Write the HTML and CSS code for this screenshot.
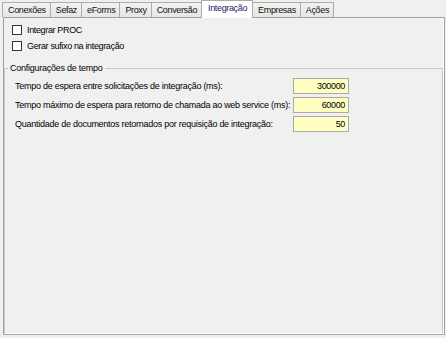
FILE: index.html
```html
<!DOCTYPE html>
<html lang="pt">
<head>
<meta charset="utf-8">
<title>Integração</title>
<link rel="stylesheet" href="styles.css">
</head>
<body>
<div class="tabs">
  <div class="tab">Conexões</div>
  <div class="tab">Sefaz</div>
  <div class="tab">eForms</div>
  <div class="tab">Proxy</div>
  <div class="tab">Conversão</div>
  <div class="tab active">Integração</div>
  <div class="tab">Empresas</div>
  <div class="tab">Ações</div>
</div>
<div class="panel">
  <div class="checks">
    <label class="check"><span class="box"></span>Integrar PROC</label>
    <label class="check"><span class="box"></span>Gerar sufixo na integração</label>
  </div>
  <fieldset class="group">
    <legend>Configurações de tempo</legend>
    <div class="rows">
      <span class="lbl">Tempo de espera entre solicitações de integração (ms):</span>
      <span class="field">300000</span>
      <span class="lbl">Tempo máximo de espera para retorno de chamada ao web service (ms):</span>
      <span class="field">60000</span>
      <span class="lbl">Quantidade de documentos retornados por requisição de integração:</span>
      <span class="field">50</span>
    </div>
  </fieldset>
</div>
</body>
</html>
```

FILE: styles.css
```css
html, body {
  margin: 0;
  padding: 0;
  background: #f0f0f0;
  font-family: "Liberation Sans", Arial, sans-serif;
  font-size: 9px;
  letter-spacing: -0.35px;
  color: #000;
  width: 446px;
  height: 338px;
  overflow: hidden;
}

.tabs {
  display: flex;
  align-items: flex-end;
  padding: 0 0 0 2px;
  height: 17px;
  position: relative;
  z-index: 2;
}

.tab {
  height: 15px;
  box-sizing: border-box;
  padding: 0 4px 0 5px;
  line-height: 14px;
  border: 1px solid #acacac;
  border-bottom: none;
  border-right: none;
  background: linear-gradient(#f2f2f2, #e6e6e6);
  color: #111;
  white-space: nowrap;
}

.tab:nth-child(8) {
  border-right: 1px solid #acacac;
}

.tab.active {
  height: 18px;
  margin-bottom: -1px;
  background: #fff;
  border-right: 1px solid #acacac;
  padding: 0 5px 0 6px;
  line-height: 14px;
  color: #2a1a6a;
}

.tab.active + .tab {
  border-left: none;
}

.panel {
  box-sizing: border-box;
  margin: 0 1px 0 3px;
  height: 318px;
  border: 1px solid #a0a0a0;
  box-shadow: inset -1px -1px 0 #ffffff;
  display: flex;
  flex-direction: column;
  position: relative;
  z-index: 1;
}

.checks {
  display: flex;
  flex-direction: column;
  padding: 4px 0 0 8px;
}

.check {
  display: flex;
  align-items: center;
  gap: 5px;
  height: 16px;
}

.box {
  width: 10px;
  height: 10px;
  box-sizing: border-box;
  border: 1px solid #333;
  background: #fff;
}

.group {
  flex: 1;
  margin: 9px 1px 1px 0;
  padding: 4px 0 0 0;
  border: 1px solid #c8c8c8;
  border-bottom: none;
  min-width: 0;
}

.group legend {
  margin-left: 3px;
  padding: 0 2px;
  line-height: 11px;
  letter-spacing: -0.25px;
}

.rows {
  display: grid;
  grid-template-columns: 278px 56px;
  row-gap: 3px;
  align-items: center;
  padding-left: 10px;
}

.lbl {
  white-space: nowrap;
  letter-spacing: -0.26px;
}

.field {
  height: 16px;
  box-sizing: border-box;
  border: 1px solid #a9a9a9;
  background: #ffffc4;
  text-align: right;
  padding-right: 3px;
  line-height: 14px;
}
```
